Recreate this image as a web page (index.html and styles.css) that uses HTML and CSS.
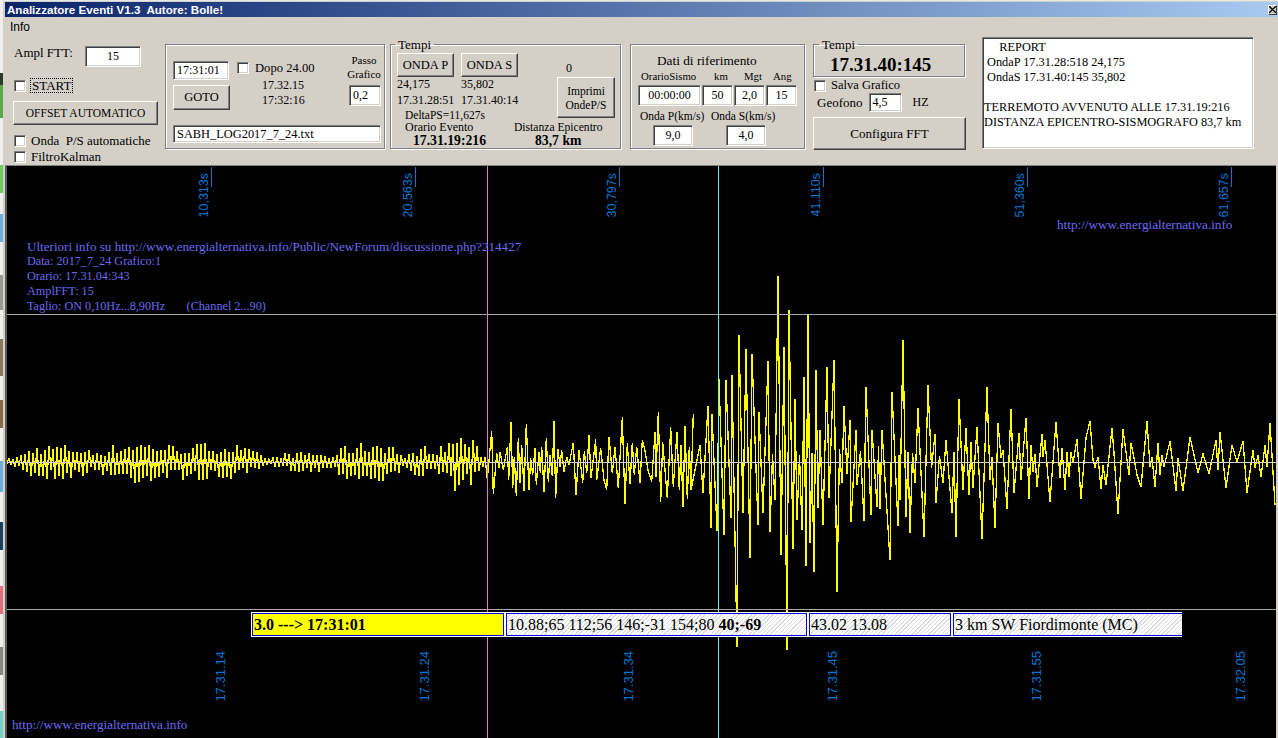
FILE: index.html
```html
<!DOCTYPE html>
<html lang="it">
<head>
<meta charset="utf-8">
<title>Analizzatore Eventi</title>
<link rel="stylesheet" href="styles.css">
</head>
<body>
<div class="screen">
  <div class="desktop"></div>
  <div class="window">
    <div class="titlebar">
      <span class="title">Analizzatore Eventi V1.3  Autore: Bolle!</span>
      <span class="close"><svg width="7" height="7" viewBox="0 0 7 7"><path d="M0 0L7 7M7 0L0 7" stroke="#000" stroke-width="1.3"/></svg></span>
    </div>
    <div class="menubar">Info</div>
    <div class="toolbar">
      <div class="col-left">
        <div class="row ampl"><span class="ampl-label">Ampl FTT:</span><div class="field ampl-field">15</div></div>
        <div class="row start"><span class="chk"></span><span class="focus">START</span></div>
        <div class="btn offset">OFFSET AUTOMATICO</div>
        <div class="row onda"><span class="chk"></span><span>Onda  P/S automatiche</span></div>
        <div class="row kalman"><span class="chk"></span><span>FiltroKalman</span></div>
      </div>

      <div class="panel goto-panel">
        <div class="goto-top">
          <div class="goto-a">
            <div class="field time-field">17:31:01</div>
            <div class="btn goto">GOTO</div>
          </div>
          <div class="goto-b">
            <div class="row dopo"><span class="chk"></span><span>Dopo 24.00</span></div>
            <div class="goto-time">17.32.15</div>
            <div class="goto-time">17:32:16</div>
          </div>
          <div class="goto-c">
            <div class="passo">Passo<br>Grafico</div>
            <div class="field passo-field">0,2</div>
          </div>
        </div>
        <div class="field file-field">SABH_LOG2017_7_24.txt</div>
      </div>

      <fieldset class="panel tempi">
        <legend>Tempi</legend>
        <div class="tempi-top">
          <div class="tempi-waves">
            <div class="wave-col">
              <div class="btn onda-btn">ONDA P</div>
              <div class="wave-val">24,175</div>
              <div class="wave-val time">17.31.28:51</div>
            </div>
            <div class="wave-col">
              <div class="btn onda-btn">ONDA S</div>
              <div class="wave-val">35,802</div>
              <div class="wave-val time">17.31.40:14</div>
            </div>
          </div>
          <div class="imprimi-col">
            <div class="zero">0</div>
            <div class="btn imprimi">Imprimi<br>OndeP/S</div>
          </div>
        </div>
        <div class="delta">DeltaPS=11,627s</div>
        <div class="event">
          <div class="event-a"><div>Orario Evento</div><div class="strong">17.31.19:216</div></div>
          <div class="event-b"><div class="dist">Distanza Epicentro</div><div class="strong">83,7 km</div></div>
        </div>
      </fieldset>

      <div class="panel dati">
        <div class="dati-title">Dati di riferimento</div>
        <div class="dati-labels"><span class="l1">OrarioSismo</span><span class="l2">km</span><span class="l3">Mgt</span><span class="l4">Ang</span></div>
        <div class="dati-fields">
          <div class="field f1">00:00:00</div>
          <div class="field f2">50</div>
          <div class="field f2">2,0</div>
          <div class="field f2">15</div>
        </div>
        <div class="dati-speed">
          <div class="speed-col"><div>Onda P(km/s)</div><div class="field speed-field">9,0</div></div>
          <div class="speed-col"><div>Onda S(km/s)</div><div class="field speed-field">4,0</div></div>
        </div>
      </div>

      <div class="col-config">
        <fieldset class="panel tempi2">
          <legend>Tempi</legend>
          <div class="big-time">17.31.40:145</div>
        </fieldset>
        <div class="row salva"><span class="chk"></span><span>Salva Grafico</span></div>
        <div class="row geofono"><span>Geofono</span><div class="field geo-field">4,5</div><span class="hz">HZ</span></div>
        <div class="btn config">Configura FFT</div>
      </div>

      <div class="field report">     REPORT
 OndaP 17.31.28:518 24,175
 OndaS 17.31.40:145 35,802

TERREMOTO AVVENUTO ALLE 17.31.19:216
DISTANZA EPICENTRO-SISMOGRAFO 83,7 km</div>
    </div>

    <div class="plot">
      <svg class="plot-svg" id="plot" viewBox="7 166 1269 572" preserveAspectRatio="xMinYMin" xmlns="http://www.w3.org/2000/svg">
        <polyline id="wave" class="wave" points=""/>
        <path class="grid" d="M7 314.5H1276M7 609.5H1276"/>
        <path class="grid mid" d="M7 462.5H1276"/>
        <path class="pink" d="M487.5 166V738"/>
        <path class="cyan" d="M718.5 166V738"/>
        <path class="tick" d="M211.5 167V187M415.5 167V187M619.5 167V187M823.5 167V187M1027.5 167V187M1231.5 167V187"/>
      </svg>
      <span class="vlabel top t1">10,313s</span>
      <span class="vlabel top t2">20,563s</span>
      <span class="vlabel top t3">30,797s</span>
      <span class="vlabel top t4">41,110s</span>
      <span class="vlabel top t5">51,360s</span>
      <span class="vlabel top t6">61,657s</span>
      <span class="vlabel bottom t1">17.31.14</span>
      <span class="vlabel bottom t2">17.31.24</span>
      <span class="vlabel bottom t3">17.31.34</span>
      <span class="vlabel bottom t4">17.31.45</span>
      <span class="vlabel bottom t5">17.31.55</span>
      <span class="vlabel bottom t6">17.32.05</span>
      <div class="notes">Ulteriori info su http://www.energialternativa.info/Public/NewForum/discussione.php?214427
Data: 2017_7_24 Grafico:1
Orario: 17.31.04:343
AmplFFT: 15
Taglio: ON 0,10Hz...8,90Hz       (Channel 2...90)</div>
      <div class="link link-top">http://www.energialternativa.info</div>
      <div class="link link-bottom">http://www.energialternativa.info</div>
      <div class="quake">
        <div class="cell c1"><b>3.0 ---&gt; 17:31:01</b></div>
        <div class="cell hatch c2">10.88;65 112;56 146;-31 154;80 <b>40;-69</b></div>
        <div class="cell hatch c3">43.02 13.08</div>
        <div class="cell hatch c4">3 km SW Fiordimonte (MC)</div>
      </div>
    </div>
  </div>
</div>
<script src="wave.js"></script>
</body>
</html>
```
FILE: styles.css
```css
* { box-sizing: border-box; }
html, body { margin: 0; height: 100%; overflow: hidden; background: #fff; }
body { font: 12px/15px "Liberation Serif", "Times New Roman", serif; color: #000; }
.screen { display: flex; width: 1278px; height: 738px; }
.desktop {
  width: 3px;
  flex: none;
  background: linear-gradient(#eee 0 73px, #2b3a2a 73px 85px, #5aa848 85px 118px, #eee 118px 165px, #6fc860 165px 193px, #eee 193px 214px, #6aaedd 214px 242px, #eee 242px 275px, #999 275px 310px, #eee 310px 339px, #8a7a60 339px 376px, #eee 376px 400px, #8a6a40 400px 428px, #eee 428px 461px, #6aaedd 461px 492px, #eee 492px 522px, #1f3f60 522px 550px, #eee 550px 586px, #e07080 586px 614px, #eee 614px 647px, #888 647px 675px, #eee 675px 711px, #70d0c8 711px 738px);
}
.window {
  flex: 1;
  min-width: 0;
  display: flex;
  flex-direction: column;
  background: #d4d0c8;
  padding: 2px 0 0 2px;
  border-top: 1px solid #e8e8e8;
}
.titlebar {
  height: 15px;
  flex: none;
  display: flex;
  align-items: center;
  justify-content: space-between;
  padding: 0 1px 0 2px;
  background: linear-gradient(90deg, #0a246a, #a6caf0);
  margin-top: -1px;
}
.title { font: bold 11.6px/15px "Liberation Sans", Arial, sans-serif; color: #fff; white-space: pre; }
.close {
  width: 9px; height: 10px;
  display: flex; align-items: center; justify-content: center;
  background: #d4d0c8;
  border: 1px solid; border-color: #fff #404040 #404040 #fff;
}
.menubar { flex: none; height: 19px; padding: 3px 0 0 5px; font: 12px/14px "Liberation Sans", Arial, sans-serif; }

.toolbar { flex: none; height: 130px; display: flex; align-items: flex-start; }
.row { display: flex; align-items: center; }
.chk {
  flex: none; width: 12px; height: 12px; background: #fff;
  border: 1px solid; border-color: #808080 #fff #fff #808080;
  box-shadow: inset 1px 1px 0 #404040, inset -1px -1px 0 #d4d0c8;
}
.field {
  background: #fff; white-space: pre;
  border: 1px solid; border-color: #808080 #fff #fff #808080;
  box-shadow: inset 1px 1px 0 #404040, inset -1px -1px 0 #d4d0c8;
  display: flex; align-items: center; justify-content: center;
}
.btn {
  background: #d4d0c8; display: flex; align-items: center; justify-content: center; text-align: center;
  border: 1px solid; border-color: #fff #404040 #404040 #fff;
  box-shadow: inset -1px -1px 0 #808080;
}
.panel { border: 1px solid #808080; box-shadow: 1px 1px 0 #fff, inset 1px 1px 0 #fff; margin: 0; min-width: 0; }
legend { padding: 0 3px; line-height: 13px; font-size: 13px; }

.col-left { width: 160px; flex: none; padding: 10px 0 0 8px; font-size: 13px; }
.ampl { height: 21px; }
.ampl-label { width: 72px; padding: 0 0 8px 1px; }
.ampl-field { width: 56px; height: 21px; font-size: 12px; }
.start { margin-top: 11px; height: 15px; padding-left: 1px; }
.focus { margin-left: 5px; padding: 0 1px; line-height: 13px; outline: 1px dotted #000; white-space: nowrap; }
.offset { width: 145px; height: 24px; margin-top: 8px; font-size: 11.5px; }
.onda { margin-top: 9px; height: 13px; padding-left: 1px; white-space: pre; }
.onda span:last-child, .kalman span:last-child { margin-left: 5px; }
.kalman { margin-top: 3px; height: 13px; padding-left: 1px; }

.goto-panel { width: 220px; height: 105px; margin-top: 8px; padding: 16px 3px 0 7px; flex: none; }
.goto-top { display: flex; height: 49px; }
.goto-a { width: 64px; flex: none; }
.time-field { width: 56px; height: 19px; justify-content: flex-start; padding-left: 3px; }
.goto { width: 57px; height: 25px; margin-top: 5px; font-size: 12.5px; }
.goto-b { width: 112px; flex: none; }
.dopo { height: 13px; padding-top: 1px; }
.dopo span:last-child { margin-left: 6px; white-space: nowrap; font-size: 12.6px; }
.goto-time { padding-left: 25px; line-height: 15px; }
.dopo + .goto-time { margin-top: 4px; }
.goto-c { width: 32px; flex: none; text-align: center; margin-top: -8px; font-size: 11px; }
.passo { line-height: 14px; margin-left: -7px; margin-right: -5px; }
.passo-field { width: 32px; height: 21px; margin-top: 4px; justify-content: flex-start; padding-left: 3px; font-size: 12px; }
.file-field { width: 208px; height: 18px; margin-top: 15px; justify-content: flex-start; padding-left: 3px; font-size: 12.4px; }

.tempi { width: 231px; height: 111px; margin-left: 5px; margin-top: 2px; padding: 0 0 0 6px; flex: none; }
.tempi legend { margin-left: -2px; }
.tempi-top { display: flex; margin-top: 2px; height: 55px; }
.tempi-waves { display: flex; width: 160px; flex: none; }
.wave-col { width: 64px; flex: none; }
.onda-btn { width: 57px; height: 24px; font-size: 12.5px; }
.wave-val { line-height: 15px; white-space: nowrap; }
.wave-val.time { margin-top: 1px; }
.imprimi-col { width: 58px; flex: none; }
.zero { padding-left: 9px; margin-top: 8px; height: 16px; }
.imprimi { width: 58px; height: 41px; font-size: 11.5px; line-height: 14px; }
.delta { padding-left: 8px; margin-top: 1px; font-size: 11.5px; line-height: 12px; }
.event { display: flex; line-height: 13px; }
.event-a { width: 117px; padding-left: 8px; flex: none; }
.event-b { white-space: nowrap; }
.dist { font-size: 11.6px; }
.strong { font-weight: bold; font-size: 13.7px; line-height: 14px; }
.event-a .strong { padding-left: 8px; }
.event-b .strong { padding-left: 21px; }

.dati { width: 175px; height: 105px; margin-left: 9px; margin-top: 8px; padding: 8px 0 0 7px; flex: none; }
.dati-title { padding-left: 19px; font-size: 13.3px; line-height: 15px; white-space: nowrap; }
.dati-labels { display: flex; font-size: 10.8px; line-height: 15px; padding-left: 3px; margin-top: 1px; white-space: nowrap; }
.l1 { width: 73px; } .l2 { width: 30px; } .l3 { width: 29px; }
.dati-fields { display: flex; gap: 1px; margin-top: 1px; }
.f1 { width: 63px; height: 21px; }
.f2 { width: 31px; height: 21px; }
.dati-speed { display: flex; padding-left: 2px; margin-top: 3px; font-size: 11.5px; line-height: 15px; white-space: nowrap; }
.speed-col { width: 71px; flex: none; }
.speed-field { width: 40px; height: 21px; margin: 1px 0 0 13px; font-size: 12px; }
.speed-col + .speed-col .speed-field { margin-left: 15px; }

.col-config { width: 153px; margin-left: 8px; flex: none; margin-top: 2px; }
.tempi2 { width: 152px; height: 39px; padding: 0 0 0 16px; }
.tempi2 legend { margin-left: -11px; }
.big-time { font-weight: bold; font-size: 19px; line-height: 19px; margin-top: 4px; white-space: nowrap; }
.salva { margin-top: 2px; height: 13px; padding-left: 1px; }
.salva span:last-child { margin-left: 5px; white-space: nowrap; font-size: 12.5px; }
.geofono { margin-top: 1px; height: 19px; padding-left: 4px; font-size: 13px; }
.geo-field { width: 33px; height: 19px; margin-left: 6px; justify-content: flex-start; padding-left: 3px; font-size: 12px; }
.hz { margin-left: 11px; font-size: 12px; }
.config { width: 153px; height: 33px; margin-top: 5px; font-size: 13px; }

.report {
  width: 272px; height: 112px; margin-left: 16px; margin-top: 1px; padding: 2px 0 0 1px; flex: none;
  display: block; line-height: 15px; font-size: 12.3px; white-space: pre;
}

.plot {
  flex: 1; min-height: 0; position: relative; background: #000;
  margin: 0 2px 0 0; overflow: hidden;
  border-left: 2px solid #5a5a5a;
  box-shadow: 0 -1px 0 #808080;
}
.plot-svg { position: absolute; inset: 0; width: 1269px; height: 572px; display: block; }
.wave { fill: none; stroke: #ffff00; stroke-width: 1.3; shape-rendering: crispEdges; }
.grid { stroke: #a8a8a8; stroke-width: 1; fill: none; shape-rendering: crispEdges; }
.grid.mid { stroke: #d0d0d0; }
.pink { stroke: #e078c8; shape-rendering: crispEdges; }
.cyan { stroke: #70f0e0; shape-rendering: crispEdges; }
.tick { stroke: #0078d7; shape-rendering: crispEdges; }

.vlabel {
  position: absolute; font: 12.5px/12px "Liberation Sans", Arial, sans-serif; color: #0078d7;
  writing-mode: vertical-rl; transform: rotate(180deg); white-space: nowrap;
}
.vlabel.top { bottom: 521px; }
.vlabel.bottom { bottom: 36px; font-size: 13px; }
.top.t1 { left: 191px; } .top.t2 { left: 395px; } .top.t3 { left: 599px; }
.top.t4 { left: 803px; } .top.t5 { left: 1007px; } .top.t6 { left: 1211px; }
.bottom.t1 { left: 208px; } .bottom.t2 { left: 412px; } .bottom.t3 { left: 616px; }
.bottom.t4 { left: 820px; } .bottom.t5 { left: 1024px; } .bottom.t6 { left: 1228px; }

.notes { position: absolute; left: 20px; top: 73px; color: #6a6af0; white-space: pre; line-height: 15px; font-size: 12.2px; }
.notes::first-line { font-size: 13.1px; }
.link { position: absolute; color: #6a6af0; white-space: nowrap; font-size: 13.2px; }
.link-top { left: 1050px; top: 51px; }
.link-bottom { left: 5px; top: 551px; }

.quake {
  position: absolute; left: 244px; top: 446px; width: 931px; height: 25px;
  display: flex; gap: 2px; background: #fff; padding: 1px 0 1px 1px;
  font-size: 16px; line-height: 21px; white-space: nowrap;
}
.cell { border: 1px solid #0000e0; padding-left: 1px; height: 23px; flex: none; overflow: hidden; }
.c1 { width: 252px; background: #ffff00; }
.c2 { width: 301px; }
.c3 { width: 142px; }
.c4 { width: 229px; border-right: 0; }
.hatch { background: repeating-linear-gradient(135deg, #fff 0 2px, #dcdcdc 2px 3px); }
```
FILE: wave.js
```js
(function () {
  var CY = 462;
  var seed = 7;
  function rnd() { seed = (seed * 16807) % 2147483647; return seed / 2147483647; }

  // Quiet opening: amplitude envelope as [x, half-height]
  var env = [[7,3],[20,6],[33,15],[60,16],[75,15],[85,12],[95,10],[120,17],[135,19],[157,17],[180,15],
             [200,17],[220,17],[240,15],[262,7],[270,3],[285,8],[300,9],[320,9],[330,5],[345,15],[365,18],
             [385,20],[400,11],[405,4],[420,15],[440,14],[455,25],[470,24],[480,10],[486,5]];
  function ampAt(x) {
    for (var i = 1; i < env.length; i++) {
      if (x <= env[i][0]) {
        var a = env[i - 1], b = env[i];
        return a[1] + (b[1] - a[1]) * (x - a[0]) / (b[0] - a[0]);
      }
    }
    return 5;
  }
  var pts = [], sign = 1, x;
  for (x = 7; x < 487; x += 2) {
    pts.push([x, CY + sign * ampAt(x) * (0.45 + 0.7 * rnd())]);
    sign = -sign;
  }

  // Onset, read from the reference as [zoomX, zoomY] (x = 400 + X/3, y = 390 + Y/3)
  var onset = [[262,268],[275,122],[280,313],[290,190],[297,235],[300,185],[310,240],[322,172],[326,270],[333,97],
    [338,295],[343,200],[349,318],[355,145],[360,280],[365,165],[372,303],[379,102],[387,300],[392,205],[398,255],
    [405,175],[409,285],[417,185],[421,250],[425,170],[432,305],[439,145],[445,275],[450,195],[457,258],[462,93],
    [467,323],[474,178],[480,230],[485,180],[492,245],[500,200],[507,225],[520,158],[528,315],[537,180],[548,280],
    [553,183],[560,250],[567,135],[573,265],[587,148],[590,270],[602,175],[612,270],[620,300],[627,140],[637,250],
    [645,170],[655,295],[667,82],[675,342],[682,160],[690,282],[697,158],[703,255],[710,170],[720,278],[727,150],
    [735,182],[745,245],[755,275],[765,127],[768,260],[775,67],[782,337],[788,155],[802,325],[812,112],[820,290],
    [831,125],[838,300],[843,165],[849,350],[855,108],[862,328],[868,170],[873,300],[880,72]];
  onset.forEach(function (p) { pts.push([400 + p[0] / 3, 390 + p[1] / 3]); });

  // Main shock: peaks above and below the base line
  var shock = [[691,490],[700,445],[703,493],[708,406],[711,528],[712,414],[717,531],[719,379],[724,535],[726,380],
    [731,518],[732,375],[737,647],[739,335],[743,513],[746,349],[750,558],[752,354],[758,525],[759,412],[763,513],
    [768,361],[770,532],[775,500],[778,276],[781,555],[784,347],[787,650],[789,310],[793,549],[795,399],[797,520],
    [802,530],[804,377],[806,566],[808,315],[810,543],[814,572],[816,370],[818,508],[820,430],[823,525],[827,367],
    [829,498],[834,360],[837,592],[842,483],[844,406],[850,420],[851,522],[856,430],[857,485],[864,521],[866,387],
    [871,515],[872,430],[877,507],[880,509],[882,430],[890,560],[892,392],[898,526],[900,500],[903,340],[906,517],
    [910,533],[915,483],[918,408],[924,537],[928,385],[935,434],[936,503],[943,483],[946,440],[952,513],[956,537],[959,399]];
  shock.forEach(function (p) { pts.push(p); });

  // Coda, read point by point from the reference
  var coda = [[963,490],[966,428],[969,495],[971,442],[973,488],[977,427],[982,539],[987,387],[990,480],[992,457],
    [995,528],[998,423],[1001,458],[1003,450],[1007,509],[1011,409],[1014,493],[1019,433],[1021,480],[1026,418],
    [1029,499],[1031,445],[1033,472],[1035,454],[1037,487],[1042,434],[1043,457],[1045,440],[1050,502],[1056,422],
    [1060,478],[1062,448],[1065,490],[1067,452],[1069,477],[1071,452],[1073,463],[1077,439],[1081,499],[1086,438],
    [1090,421],[1093,460],[1095,467],[1098,457],[1101,489],[1103,465],[1106,485],[1112,428],[1114,453],[1118,514],
    [1123,429],[1129,475],[1131,443],[1134,458],[1137,475],[1141,487],[1147,421],[1150,467],[1152,457],[1155,487],
    [1158,443],[1160,475],[1162,455],[1164,467],[1170,441],[1176,491],[1178,458],[1183,491],[1190,437],[1198,473],
    [1203,454],[1209,474],[1216,440],[1218,470],[1220,432],[1226,488],[1232,445],[1237,462],[1243,441],[1247,493],
    [1253,450],[1255,468],[1258,455],[1261,477],[1265,445],[1267,467],[1270,423],[1275,505]];
  coda.forEach(function (p) { pts.push(p); });

  // Consecutive peaks on one side get a small swing across the base line between them
  var out = [];
  pts.forEach(function (p, i) {
    if (i && p[0] > 690 && p[0] < 960) {
      var q = pts[i - 1];
      if ((p[1] < CY) === (q[1] < CY)) {
        var up = p[1] > CY;
        out.push([(p[0] + q[0]) / 2, CY + (up ? -1 : 1) * (6 + 10 * rnd())]);
      }
    }
    out.push(p);
  });

  document.getElementById("wave").setAttribute("points",
    out.map(function (p) { return p[0].toFixed(1) + "," + p[1].toFixed(1); }).join(" "));
})();
```
